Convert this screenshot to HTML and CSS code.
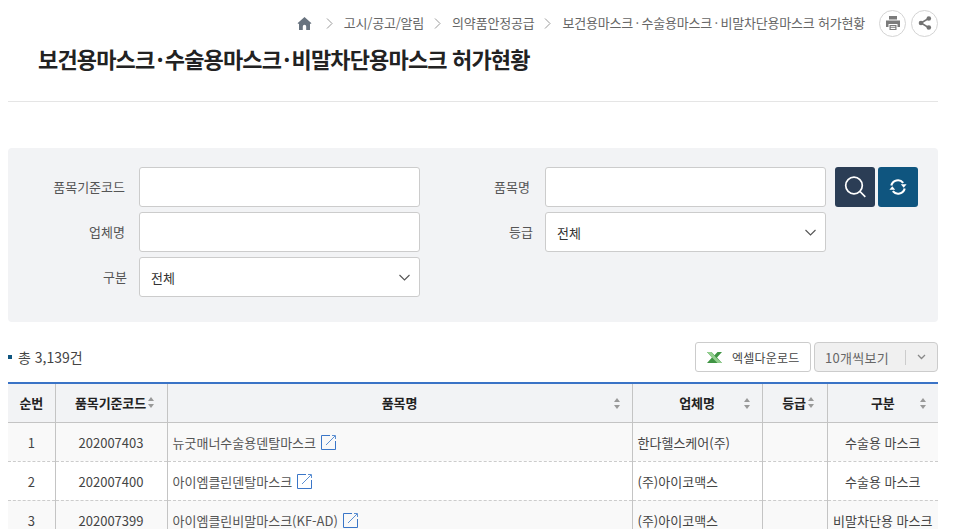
FILE: index.html
```html
<!DOCTYPE html>
<html lang="ko">
<head>
<meta charset="utf-8">
<title>보건용마스크·수술용마스크·비말차단용마스크 허가현황</title>
<link rel="stylesheet" href="styles.css">
</head>
<body>
<div class="page">
  <div class="topbar">
    <nav class="crumbs">
      <svg class="home" width="15" height="13" viewBox="0 0 15 13"><path fill="#68737f" d="M7.500 0 14.500 6.300 13 7V13H9.200V9.500a1.700 1.700 0 0 0-3.400 0V13H2V7L.5 6.300z"/></svg>
      <svg class="sep" width="7" height="11" viewBox="0 0 7 11"><path fill="none" stroke="#999" d="M1 .5 6 5.500 1 10.500"/></svg>
      <span>고시/공고/알림</span>
      <svg class="sep" width="7" height="11" viewBox="0 0 7 11"><path fill="none" stroke="#999" d="M1 .5 6 5.500 1 10.500"/></svg>
      <span>의약품안정공급</span>
      <svg class="sep" width="7" height="11" viewBox="0 0 7 11"><path fill="none" stroke="#999" d="M1 .5 6 5.500 1 10.500"/></svg>
      <span>보건용마스크<b class="dot">·</b>수술용마스크<b class="dot">·</b>비말차단용마스크 허가현황</span>
    </nav>
    <div class="tools">
      <button class="round" type="button" aria-label="인쇄"><svg width="14" height="14" viewBox="0 0 14 14"><path fill="#7b7b7b" d="M3 0h8v3.500H3zM0 4.500h14V11h-2.500V8h-9v3H0zM3.500 9h7v5h-7z"/><path fill="#fff" d="M4.700 10.300h4.600v.9H4.700zM4.700 12h4.600v.9H4.700z"/></svg></button>
      <button class="round" type="button" aria-label="공유"><svg width="14" height="14" viewBox="0 0 14 14"><path fill="none" stroke="#737373" stroke-width="1.500" d="M10.500 2.500 3 7l7.500 4.500"/><circle fill="#737373" cx="10.800" cy="2.500" r="2.300"/><circle fill="#737373" cx="3" cy="7" r="2.300"/><circle fill="#737373" cx="10.800" cy="11.500" r="2.300"/></svg></button>
    </div>
  </div>
  <h1 class="title">보건용마스크<b class="dot">·</b>수술용마스크<b class="dot">·</b>비말차단용마스크 허가현황</h1>

  <form class="search">
    <label class="lbl">품목기준코드</label>
    <input class="field" type="text">
    <label class="lbl lbl-name">품목명</label>
    <input class="field" type="text">
    <div class="actions">
      <button class="act act-search" type="button" aria-label="검색"><svg width="24" height="24" viewBox="0 0 24 24"><circle cx="11" cy="10.500" r="8.300" fill="none" stroke="#fff" stroke-width="1.700"/><path stroke="#fff" stroke-width="1.700" d="m17 16.500 5.300 5.300"/></svg></button>
      <button class="act act-reset" type="button" aria-label="초기화"><svg width="18" height="18" viewBox="0 0 18 18"><path fill="none" stroke="#fff" stroke-width="2.100" d="M2.300 7.500A6.800 6.800 0 0 1 14.200 4.800M15.700 10.500A6.800 6.800 0 0 1 3.800 13.200"/><path fill="#fff" d="M11.800 6.300 17.600 6.300 14.700 9.800zM6.200 11.700H.4L3.300 8.200z"/></svg></button>
    </div>
    <label class="lbl">업체명</label>
    <input class="field" type="text">
    <label class="lbl lbl-short">등급</label>
    <div class="selectbox"><select class="field sel"><option>전체</option></select><svg class="chev" width="11" height="7" viewBox="0 0 11 7"><path fill="none" stroke="#555" stroke-width="1.100" d="m.5 1 5 5 5-5"/></svg></div>
    <div class="spacer"></div>
    <label class="lbl lbl-short">구분</label>
    <div class="selectbox"><select class="field sel"><option>전체</option></select><svg class="chev" width="11" height="7" viewBox="0 0 11 7"><path fill="none" stroke="#555" stroke-width="1.100" d="m.5 1 5 5 5-5"/></svg></div>
  </form>

  <div class="listbar">
    <p class="total">총 3,139건</p>
    <div class="listtools">
      <button class="excel" type="button"><svg width="15" height="11" viewBox="0 0 15 11"><path fill="#3f9443" d="M0 0h4.500L7.500 3.200 10.500 0H15L10 5.500 15 11H0l5-5.500z"/><path fill="#93cf8f" d="M0 0h4.500L9 5.500 15 11h-4.500L5 5.500z"/></svg><span>엑셀다운로드</span></button>
      <div class="pager"><span class="pager-text">10개씩보기</span><svg width="9" height="6" viewBox="0 0 9 6"><path fill="none" stroke="#888" stroke-width="1.300" d="m1 1 3.500 3.500L8 1"/></svg></div>
    </div>
  </div>

  <table class="grid">
    <colgroup><col class="c1"><col class="c2"><col class="c3"><col class="c4"><col class="c5"><col class="c6"></colgroup>
    <thead>
      <tr>
        <th>순번</th>
        <th class="tight"><span class="th-in">품목기준코드<i class="sort"></i></span></th>
        <th class="wide"><span>품목명</span><i class="sort end"></i></th>
        <th class="wide"><span>업체명</span><i class="sort end"></i></th>
        <th class="tight"><span class="th-in">등급<i class="sort"></i></span></th>
        <th class="wide"><span>구분</span><i class="sort end"></i></th>
      </tr>
    </thead>
    <tbody>
      <tr class="odd"><td>1</td><td>202007403</td><td class="left"><a class="name" href="#">뉴굿매너수술용덴탈마스크<svg class="ext" width="16" height="16" viewBox="0 0 16 16"><path fill="none" stroke="#3a76c8" d="M9 1.500H.5v14h14V7"/><path fill="none" stroke="#5b8fd2" d="M5 11 14 2M11 1.500h3.500V5"/></svg></a></td><td class="left">한다헬스케어(주)</td><td></td><td>수술용 마스크</td></tr>
      <tr><td>2</td><td>202007400</td><td class="left"><a class="name" href="#">아이엠클린덴탈마스크<svg class="ext" width="16" height="16" viewBox="0 0 16 16"><path fill="none" stroke="#3a76c8" d="M9 1.500H.5v14h14V7"/><path fill="none" stroke="#5b8fd2" d="M5 11 14 2M11 1.500h3.500V5"/></svg></a></td><td class="left">(주)아이코맥스</td><td></td><td>수술용 마스크</td></tr>
      <tr class="odd"><td>3</td><td>202007399</td><td class="left"><a class="name" href="#">아이엠클린비말마스크(KF-AD)<svg class="ext" width="16" height="16" viewBox="0 0 16 16"><path fill="none" stroke="#3a76c8" d="M9 1.500H.5v14h14V7"/><path fill="none" stroke="#5b8fd2" d="M5 11 14 2M11 1.500h3.500V5"/></svg></a></td><td class="left">(주)아이코맥스</td><td></td><td>비말차단용 마스크</td></tr>
    </tbody>
  </table>
</div>
</body>
</html>
```
FILE: styles.css
```css
* { box-sizing: border-box; }
html, body { margin: 0; height: 100%; overflow: hidden; background: #fff; }
body { font-family: "Noto Sans CJK KR", "Noto Sans", sans-serif; font-size: 13px; color: #333; }
.page { width: 930px; margin-left: 8px; }

.topbar { display: flex; justify-content: flex-end; align-items: center; height: 28px; margin-top: 9px; }
.crumbs { display: flex; align-items: center; color: #666; font-size: 13px; letter-spacing: -0.2px; margin: 0 14px 2px 0; }
.home { margin: 2px 14px 0 0; }
.sep { margin: 2px 11px 0 0; }
.crumbs span { margin-right: 10px; }
.crumbs span:last-child { margin-right: 0; }
.dot { font-weight: 400; margin: 0 2.5px; }
.tools { display: flex; gap: 5px; }
.round { width: 27px; height: 27px; padding: 0; border: 1px solid #d4d4d4; border-radius: 50%; background: #fff; display: flex; align-items: center; justify-content: center; }

.title { margin: 5px 0 0; padding: 0 0 24px 30px; height: 60px; font-size: 22px; line-height: 32px; font-weight: 700; color: #222; letter-spacing: -0.84px; border-bottom: 1px solid #e5e5e5; white-space: nowrap; }
.title .dot { font-weight: 700; margin: 0 2px; }

.search { margin-top: 46px; height: 174px; padding: 19px 0 0; background: #f2f3f5; border-radius: 4px; display: grid; grid-template-columns: 131px 281px 125px 281px auto; grid-auto-rows: 40px; row-gap: 5px; }
.lbl { text-align: right; padding-right: 14px; line-height: 40px; color: #555; }
.lbl-name { padding-right: 15px; }
.lbl-short { padding-right: 12px; }
.field { width: 100%; height: 40px; border: 1px solid #ccc; border-radius: 3px; background: #fff; font: inherit; color: #333; }
.sel { appearance: none; -webkit-appearance: none; padding: 0 0 0 11px; }
.selectbox { position: relative; }
.chev { position: absolute; right: 10px; top: 17px; }
.actions { display: flex; gap: 3px; padding-left: 9px; }
.act { width: 40px; height: 40px; padding: 0; border: 0; border-radius: 3px; display: flex; align-items: center; justify-content: center; }
.act-search { background: #2b3d55; }
.act-reset { background: #0f557f; }

.listbar { display: flex; justify-content: space-between; align-items: center; margin-top: 20px; height: 30px; }
.total { margin: 0; display: flex; align-items: center; color: #444; font-size: 14px; }
.total::before { content: ""; width: 4px; height: 4px; margin-right: 6px; background: #0f557f; }
.listtools { display: flex; gap: 3px; }
.excel { width: 116px; height: 30px; padding: 0 0 0 11px; border: 1px solid #ccc; border-radius: 3px; background: #fff; font: inherit; font-size: 12px; letter-spacing: .2px; color: #444; display: flex; align-items: center; gap: 10px; }
.pager { width: 124px; height: 30px; padding: 0 11px 0 10px; border: 1px solid #ccc; border-radius: 4px; background: #f0f0f0; color: #666; display: flex; align-items: center; justify-content: space-between; }
.pager-text { flex: 1; border-right: 1px solid #ccc; line-height: 15px; margin-right: 11px; letter-spacing: .3px; }

.grid { width: 930px; margin-top: 10px; border-collapse: collapse; table-layout: fixed; border-top: 2px solid #3a73c6; }
.c1 { width: 47px; } .c2 { width: 112px; } .c3 { width: 465px; } .c4 { width: 130px; } .c5 { width: 65px; } .c6 { width: 111px; }
th, td { padding: 0; text-align: center; border-left: 1px solid #c4c4c4; white-space: nowrap; }
th:first-child, td:first-child { border-left: 0; }
th { height: 39px; background: #f2f3f5; color: #222; font-weight: 700; font-size: 13px; letter-spacing: -0.1px; border-bottom: 1px solid #c4c4c4; position: relative; }
th.tight { padding-left: 8px; }
td { height: 39px; padding-top: 1px; color: #444; border-bottom: 1px dashed #ccc; }
.odd td { background: #f9f9f9; }
td.left { text-align: left; padding-left: 5px; }
.name { color: #555; text-decoration: none; display: inline-flex; align-items: center; }
.ext { margin-left: 5px; }
.th-in { display: inline-flex; align-items: center; }
.sort { position: relative; display: inline-block; width: 7px; height: 11px; margin-left: 2px; }
.sort::before, .sort::after { content: ""; position: absolute; left: 0; border-left: 3.5px solid transparent; border-right: 3.5px solid transparent; }
.sort::before { top: 0; border-bottom: 4.500px solid #999; }
.sort::after { bottom: 0; border-top: 4.500px solid #999; }
.sort.end { position: absolute; right: 11px; top: 14px; margin: 0; }
```
